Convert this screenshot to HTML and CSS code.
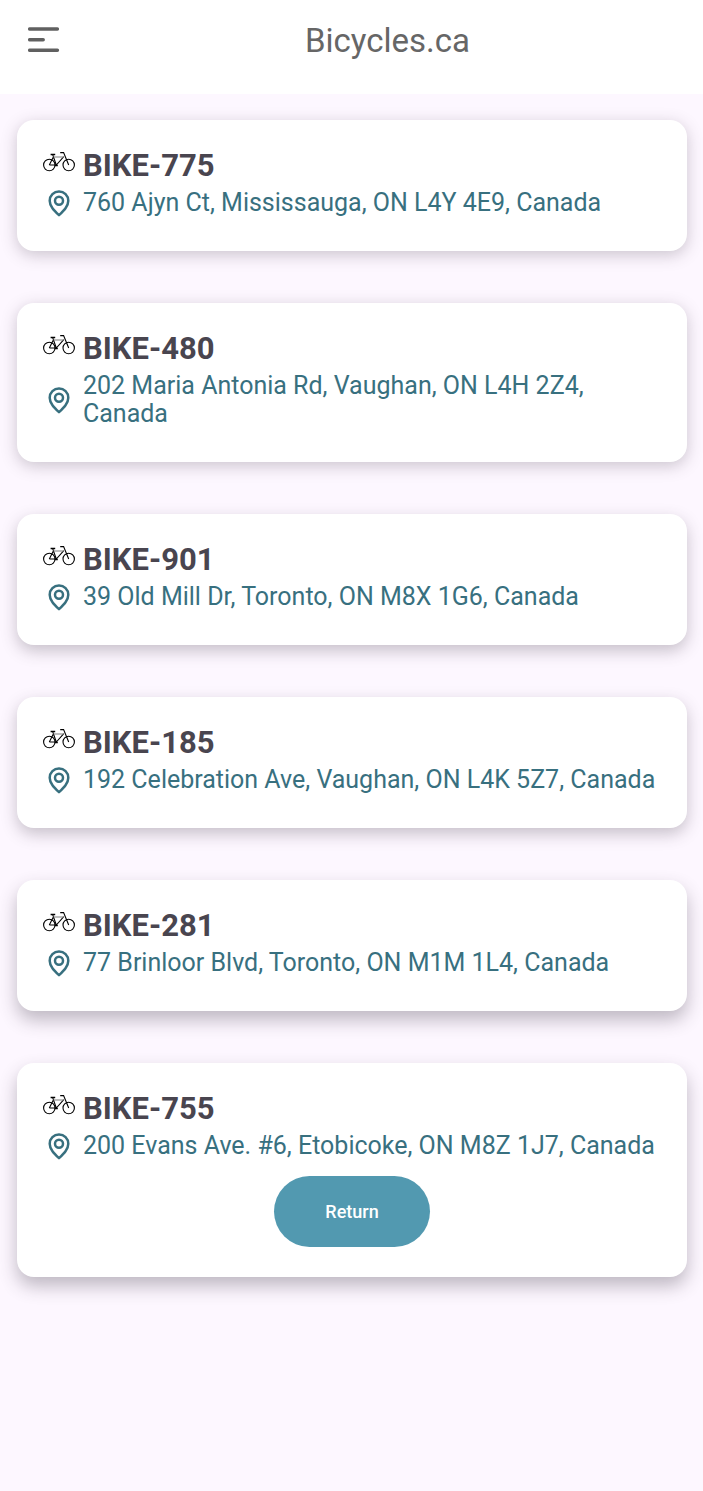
FILE: index.html
```html
<!DOCTYPE html>
<html lang="en">
<head>
<meta charset="utf-8">
<meta name="viewport" content="width=device-width, initial-scale=1">
<title>Bicycles.ca</title>
<link rel="stylesheet" href="styles.css">
</head>
<body>
<svg class="sprite" aria-hidden="true">
  <symbol id="bike" viewBox="0 0 32 21">
    <g fill="none" stroke="#000" stroke-width="1.1">
      <circle cx="6.3" cy="14" r="5.7"/>
      <circle cx="25.7" cy="14" r="5.7"/>
      <path d="M6.3 14h7l7.500-8.400M6.300 14l4.200-8.200M9.600 3.400l3.700 10.600M25.700 14L20.600 1.600h-3.400"/>
      <path d="M10.500 6h10.200" stroke="#888"/>
      <path d="M7.600 3.600h4.600M11.800 14.400h3" stroke-width="1.500"/>
    </g>
  </symbol>
  <symbol id="pin" viewBox="0 0 22 27">
    <g fill="none" stroke="#38707f" stroke-width="2.500" stroke-linejoin="round">
      <path d="M11 25.2C6 20.4 1.700 16.2 1.700 10.700a9.300 9.300 0 0 1 18.600 0c0 5.500-4.300 9.700-9.300 14.500z"/>
      <circle cx="11" cy="10.700" r="4"/>
    </g>
  </symbol>
</svg>
<header class="topbar">
  <button class="menu" type="button" aria-label="Menu">
    <svg width="32" height="26" viewBox="0 0 32 26" aria-hidden="true">
      <path d="M1.700 2h27.700M1.700 12.700h13.500M1.700 23.300h27.700" stroke="#606060" stroke-width="3.500" stroke-linecap="round"/>
    </svg>
  </button>
  <h1 class="brand">Bicycles.ca</h1>
</header>
<main class="list">
  <article class="card">
    <svg class="bike"><use href="#bike"/></svg>
    <h2 class="name">BIKE-775</h2>
    <svg class="pin"><use href="#pin"/></svg>
    <p class="address">760 Ajyn Ct, Mississauga, ON L4Y 4E9, Canada</p>
  </article>
  <article class="card">
    <svg class="bike"><use href="#bike"/></svg>
    <h2 class="name">BIKE-480</h2>
    <svg class="pin"><use href="#pin"/></svg>
    <p class="address">202 Maria Antonia Rd, Vaughan, ON L4H 2Z4, Canada</p>
  </article>
  <article class="card">
    <svg class="bike"><use href="#bike"/></svg>
    <h2 class="name">BIKE-901</h2>
    <svg class="pin"><use href="#pin"/></svg>
    <p class="address">39 Old Mill Dr, Toronto, ON M8X 1G6, Canada</p>
  </article>
  <article class="card">
    <svg class="bike"><use href="#bike"/></svg>
    <h2 class="name">BIKE-185</h2>
    <svg class="pin"><use href="#pin"/></svg>
    <p class="address">192 Celebration Ave, Vaughan, ON L4K 5Z7, Canada</p>
  </article>
  <article class="card">
    <svg class="bike"><use href="#bike"/></svg>
    <h2 class="name">BIKE-281</h2>
    <svg class="pin"><use href="#pin"/></svg>
    <p class="address">77 Brinloor Blvd, Toronto, ON M1M 1L4, Canada</p>
  </article>
  <article class="card card-last">
    <svg class="bike"><use href="#bike"/></svg>
    <h2 class="name">BIKE-755</h2>
    <svg class="pin"><use href="#pin"/></svg>
    <p class="address">200 Evans Ave. #6, Etobicoke, ON M8Z 1J7, Canada</p>
    <button class="return" type="button">Return</button>
  </article>
</main>
</body>
</html>
```

FILE: styles.css
```css
* {
  box-sizing: border-box;
}

body {
  margin: 0;
  min-height: 100vh;
  background: #fdf7ff;
  color: #49454f;
  font-family: Roboto, "Liberation Sans", sans-serif;
}

.sprite {
  display: block;
  width: 0;
  height: 0;
}

.topbar {
  display: grid;
  grid-template-columns: 72px 1fr;
  align-items: center;
  height: 94px;
  padding-bottom: 12px;
  background: #fff;
}

.menu {
  display: flex;
  padding: 0 0 0 28px;
  margin-bottom: 2px;
  border: 0;
  background: none;
}

.brand {
  margin: 0;
  color: #666;
  font-size: 33px;
  font-weight: 400;
  line-height: 40px;
  text-align: center;
}

.list {
  display: grid;
  gap: 52px;
  padding: 26px 16px 52px 17px;
}

.card {
  display: grid;
  grid-template-columns: 32px 1fr;
  column-gap: 8px;
  align-items: center;
  padding: 26px 26px 34px;
  border-radius: 17px;
  background: #fff;
  box-shadow: 0 4px 16px rgba(60, 50, 65, 0.26);
}

.card:nth-child(n + 3) {
  box-shadow: 0 6px 16px rgba(60, 50, 65, 0.28);
}

.card:nth-child(n + 5) {
  box-shadow: 0 9px 18px rgba(60, 50, 65, 0.32);
}

.card-last {
  padding-bottom: 30px;
}

.bike {
  width: 32px;
  height: 21px;
  margin-bottom: 12px;
}

.pin {
  width: 22px;
  height: 27px;
  justify-self: center;
}

.name {
  margin: 0 0 3px;
  font-size: 31px;
  font-weight: 700;
  line-height: 40px;
}

.address {
  margin: 0;
  color: #38707f;
  font-size: 25px;
  line-height: 28px;
}

.return {
  grid-column: 1 / -1;
  justify-self: center;
  height: 71px;
  margin-top: 16px;
  padding: 0 51px;
  border: 0;
  border-radius: 36px;
  background: #5299b0;
  color: #fff;
  font-family: inherit;
  font-size: 18px;
  font-weight: 500;
}
```
